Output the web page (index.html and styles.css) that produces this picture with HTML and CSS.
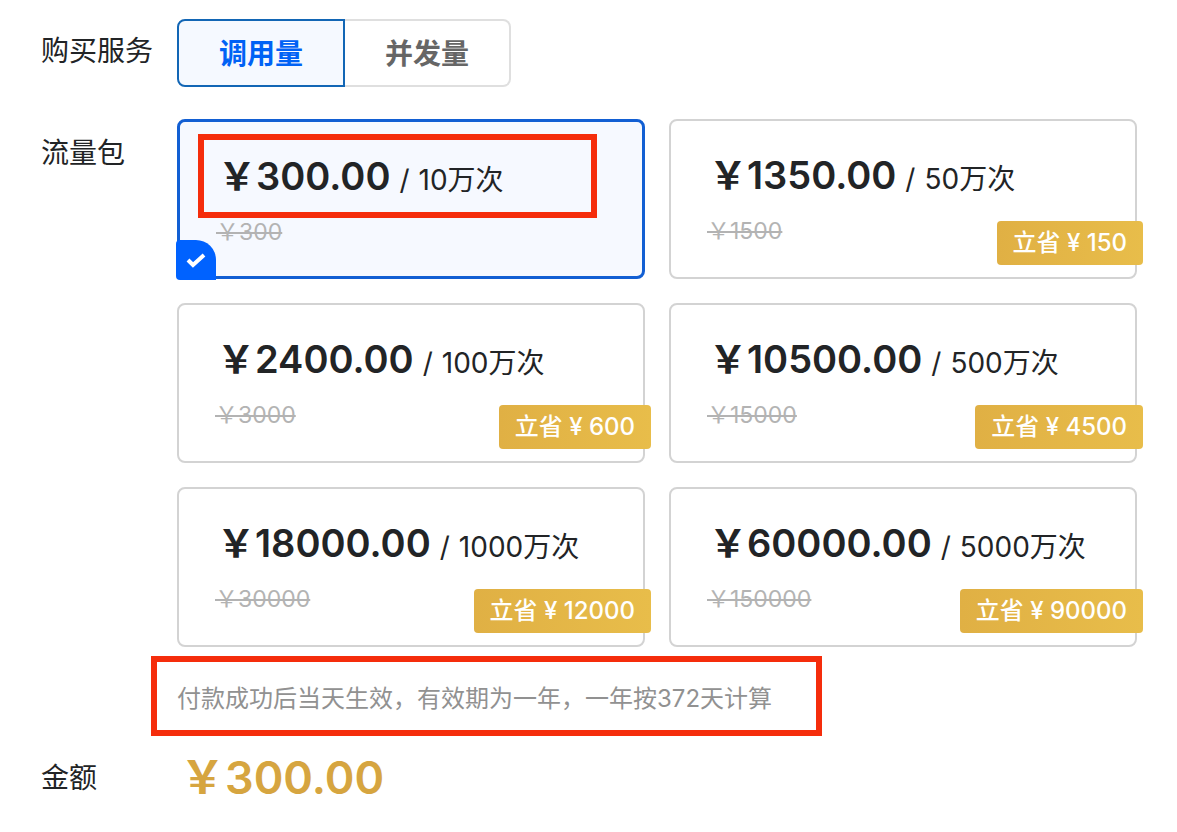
FILE: index.html
```
<!DOCTYPE html>
<html lang="zh-CN">
<head>
    <meta charset="UTF-8">
    <meta name="viewport" content="width=device-width, initial-scale=1.0">
    <title>购买服务</title>
    <link rel="stylesheet" href="styles.css">
</head>
<body>
    <form class="order">
        <div class="row">
            <span class="row-label">购买服务</span>
            <div class="tabs">
                <button type="button" class="tab active">调用量</button>
                <button type="button" class="tab">并发量</button>
            </div>
        </div>

        <div class="row row-packages">
            <span class="row-label">流量包</span>
            <div class="content">
                <div class="packages">
                    <label class="card">
                        <input type="radio" name="package" value="10" checked>
                        <span class="price-line"><span class="price">￥300.00</span><span class="slash">/</span><span class="unit">10万次</span></span>
                        <del class="old">￥300</del>
                        <span class="tick"><svg viewBox="0 0 20 16" width="20" height="16"><path d="M2 8l5 5L18 3" fill="none" stroke="#fff" stroke-width="4"/></svg></span>
                        <span class="mark mark-price"></span>
                    </label>
                    <label class="card">
                        <input type="radio" name="package" value="50">
                        <span class="price-line"><span class="price">￥1350.00</span><span class="slash">/</span><span class="unit">50万次</span></span>
                        <del class="old">￥1500</del>
                        <span class="badge">立省 ¥ 150</span>
                    </label>
                    <label class="card">
                        <input type="radio" name="package" value="100">
                        <span class="price-line"><span class="price">￥2400.00</span><span class="slash">/</span><span class="unit">100万次</span></span>
                        <del class="old">￥3000</del>
                        <span class="badge">立省 ¥ 600</span>
                    </label>
                    <label class="card">
                        <input type="radio" name="package" value="500">
                        <span class="price-line"><span class="price">￥10500.00</span><span class="slash">/</span><span class="unit">500万次</span></span>
                        <del class="old">￥15000</del>
                        <span class="badge">立省 ¥ 4500</span>
                    </label>
                    <label class="card">
                        <input type="radio" name="package" value="1000">
                        <span class="price-line"><span class="price">￥18000.00</span><span class="slash">/</span><span class="unit">1000万次</span></span>
                        <del class="old">￥30000</del>
                        <span class="badge">立省 ¥ 12000</span>
                    </label>
                    <label class="card">
                        <input type="radio" name="package" value="5000">
                        <span class="price-line"><span class="price">￥60000.00</span><span class="slash">/</span><span class="unit">5000万次</span></span>
                        <del class="old">￥150000</del>
                        <span class="badge">立省 ¥ 90000</span>
                    </label>
                </div>
                <p class="note">付款成功后当天生效，有效期为一年，一年按372天计算<span class="mark mark-note"></span></p>
            </div>
        </div>

        <div class="row row-total">
            <span class="row-label">金额</span>
            <output class="total">￥300.00</output>
        </div>
    </form>
</body>
</html>
```
FILE: styles.css
```
* { box-sizing: border-box; }
body { margin: 0; background: #fff; color: #222426; font-family: Inter, "Noto Sans CJK SC", sans-serif; font-size: 28px; }
.order { padding: 19px 40px 24px 41px; }

.row { display: flex; margin-bottom: 32px; }
.row-label { flex: 0 0 136px; line-height: 64px; }
.row-packages .row-label { padding-top: 2px; }
.content { flex: 1; }

.tabs { display: flex; }
.tab { height: 68px; padding: 0 40px 2px; border: 2px solid #dfdfdf; border-left: 0; border-radius: 0 8px 8px 0; background: #fff; color: #666; font: inherit; font-weight: 700; cursor: pointer; }
.tab.active { border: 2px solid #1266b5; border-radius: 8px 0 0 8px; background: #f5f9ff; color: #0062f5; }

.packages { display: grid; grid-template-columns: 1fr 1fr; gap: 24px; }
.card { position: relative; display: flex; flex-direction: column; height: 160px; padding: 24px 36px; border: 2px solid #d3d3d3; border-radius: 8px; cursor: pointer; }
.card:has(input:checked) { border: 3px solid #125fd3; background: #f6f9ff; }
.card input { position: absolute; opacity: 0; }
.price-line { display: flex; align-items: baseline; line-height: 60px; }
.price { padding-left: 2px; font-size: 38px; font-weight: 600; }
.slash { margin: 0 9px; }
.old { align-self: flex-start; color: #b3b3b3; font-size: 23px; line-height: 44px; }
.badge { position: absolute; right: -8px; bottom: 12px; padding: 0 16px; border-radius: 4px; background: linear-gradient(90deg, #e0b044, #e8bd4a); color: #fff; font-size: 24px; font-weight: 500; line-height: 44px; }
.tick { position: absolute; left: -4px; bottom: -4px; display: flex; align-items: center; justify-content: center; width: 40px; height: 40px; border-radius: 4px 20px 0 4px; background: #0062ff; }

.note { position: relative; margin: 24px 0 0; color: #919191; font-size: 24px; line-height: 56px; }

/* red highlight frames */
.mark { position: absolute; border: 6px solid #f52d0c; pointer-events: none; }
.mark-price { top: 12px; left: 18px; width: 399px; height: 84px; }
.mark-note { top: -15px; left: -26px; width: 671px; height: 80px; }

.row-total { align-items: center; margin: -13px 0 0; }
.total { padding-left: 3px; color: #d6a540; font-size: 45px; font-weight: 600; line-height: 64px; }
```
